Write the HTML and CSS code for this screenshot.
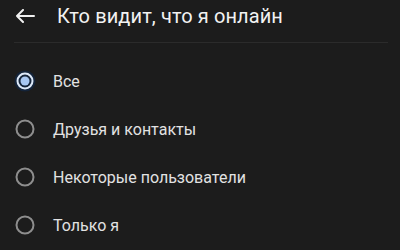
FILE: index.html
```html
<html>
    <head>
        <meta charset="utf-8">
        <title>Кто видит, что я онлайн</title>
        <link rel="stylesheet" href="styles.css">
    </head>
    <body>
        <div class="header">
            <svg class="back" width="20" height="14" viewBox="0 0 20 14">
                <path d="M19 7H2M8 1L2 7l6 6" fill="none" stroke="#f0f0f0" stroke-width="2" stroke-linecap="round" stroke-linejoin="round"/>
            </svg>
            <h1>Кто видит, что я онлайн</h1>
        </div>
        <div class="divider"></div>

        <div class="options">
            <div class="option selected">
                <svg class="radio" width="22" height="22" viewBox="0 0 22 22">
                    <circle cx="11" cy="11" r="10.5" fill="#14243a"/>
                    <circle cx="11" cy="11" r="7.5" fill="none" stroke="#dde9f9" stroke-width="2"/>
                    <circle cx="11" cy="11" r="4.5" fill="#a7c7f2"/>
                </svg>
                <span>Все</span>
            </div>
            <div class="option">
                <svg class="radio" width="22" height="22" viewBox="0 0 22 22">
                    <circle cx="11" cy="11" r="8.5" fill="none" stroke="#8e8e8e" stroke-width="2"/>
                </svg>
                <span>Друзья и контакты</span>
            </div>
            <div class="option">
                <svg class="radio" width="22" height="22" viewBox="0 0 22 22">
                    <circle cx="11" cy="11" r="8.5" fill="none" stroke="#8e8e8e" stroke-width="2"/>
                </svg>
                <span>Некоторые пользователи</span>
            </div>
            <div class="option">
                <svg class="radio" width="22" height="22" viewBox="0 0 22 22">
                    <circle cx="11" cy="11" r="8.5" fill="none" stroke="#8e8e8e" stroke-width="2"/>
                </svg>
                <span>Только я</span>
            </div>
        </div>
    </body>
</html>
```

FILE: styles.css
```css
body {
    margin: 0;
    background: #1c1c1c;
    font-family: Roboto, "Noto Sans", sans-serif;
    color: #e6e6e6;
    overflow: hidden;
}
.header {
    display: flex;
    align-items: center;
    height: 31px;
    padding: 0 0 0 15px;
}
.header .back {
    flex: none;
    margin-right: 22px;
}
.header h1 {
    margin: 0;
    font-size: 20px;
    font-weight: 400;
    color: #f2f2f2;
    letter-spacing: 0.1px;
}
.divider {
    margin: 11px 12px 0 14px;
    border-top: 1px solid #2b2b2b;
}
.options {
    padding-top: 14px;
}
.option {
    display: flex;
    align-items: center;
    height: 48px;
    padding-left: 14px;
}
.option .radio {
    flex: none;
    margin-right: 17px;
}
.option span {
    font-size: 16px;
    color: #e2e2e2;
}
```
